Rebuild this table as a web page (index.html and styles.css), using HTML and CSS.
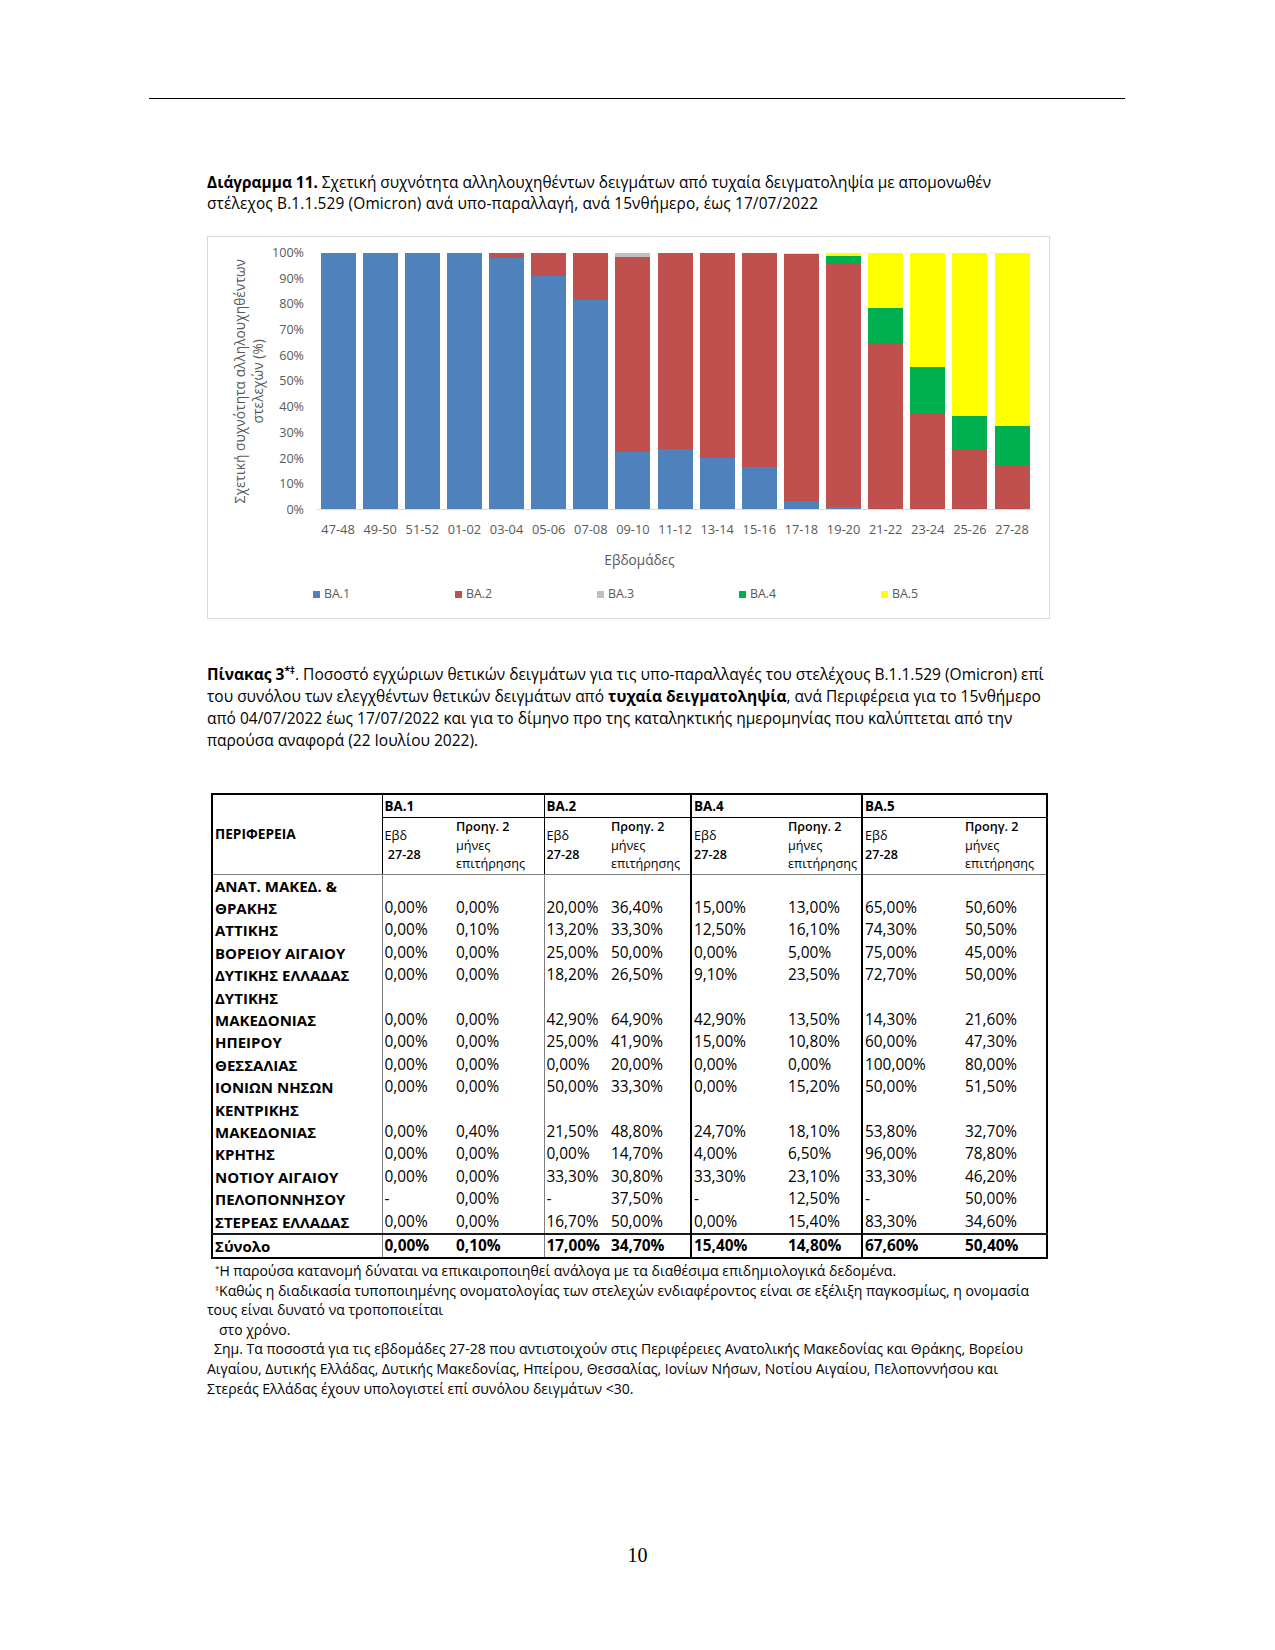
FILE: index.html
```html
<!DOCTYPE html>
<html lang="el">
<head>
<meta charset="utf-8">
<title>Διάγραμμα 11 - Πίνακας 3</title>
<link rel="stylesheet" href="styles.css">
</head>
<body>
<div class="page">
  <div class="rule"></div>
  <div class="content">
    <p class="caption"><b>Διάγραμμα 11.</b> Σχετική συχνότητα αλληλουχηθέντων δειγμάτων από τυχαία δειγματοληψία με απομονωθέν<br><span class="l2">στέλεχος Β.1.1.529 (Omicron) ανά υπο-παραλλαγή, ανά 15νθήμερο, έως 17/07/2022</span></p>

    <div class="chart">
      <div class="ytitle"><span>Σχετική συχνότητα αλληλουχηθέντων</span><br><span>στελεχών (%)</span></div>
      <div class="ylabels">
        <span>100%</span><span>90%</span><span>80%</span><span>70%</span><span>60%</span><span>50%</span><span>40%</span><span>30%</span><span>20%</span><span>10%</span><span>0%</span>
      </div>
      <div class="plot">
        <div class="slot"><div class="bar"><div class="seg ba1" style="height:100%"></div></div></div>
        <div class="slot"><div class="bar"><div class="seg ba1" style="height:100%"></div></div></div>
        <div class="slot"><div class="bar"><div class="seg ba1" style="height:100%"></div></div></div>
        <div class="slot"><div class="bar"><div class="seg ba1" style="height:100%"></div></div></div>
        <div class="slot"><div class="bar"><div class="seg ba1" style="height:98.2%"></div><div class="seg ba2" style="height:1.8%"></div></div></div>
        <div class="slot"><div class="bar"><div class="seg ba1" style="height:90.9%"></div><div class="seg ba2" style="height:9.1%"></div></div></div>
        <div class="slot"><div class="bar"><div class="seg ba1" style="height:81.8%"></div><div class="seg ba2" style="height:18.2%"></div></div></div>
        <div class="slot"><div class="bar"><div class="seg ba1" style="height:22.4%"></div><div class="seg ba2" style="height:76%"></div><div class="seg ba3" style="height:1.6%"></div></div></div>
        <div class="slot"><div class="bar"><div class="seg ba1" style="height:23.6%"></div><div class="seg ba2" style="height:76.4%"></div></div></div>
        <div class="slot"><div class="bar"><div class="seg ba1" style="height:19.8%"></div><div class="seg ba2" style="height:80.2%"></div></div></div>
        <div class="slot"><div class="bar"><div class="seg ba1" style="height:16.6%"></div><div class="seg ba2" style="height:83.4%"></div></div></div>
        <div class="slot"><div class="bar"><div class="seg ba1" style="height:3%"></div><div class="seg ba2" style="height:96.5%"></div><div class="seg ba5" style="height:0.5%"></div></div></div>
        <div class="slot"><div class="bar"><div class="seg ba1" style="height:0.8%"></div><div class="seg ba2" style="height:94.8%"></div><div class="seg ba4" style="height:3.4%"></div><div class="seg ba5" style="height:1%"></div></div></div>
        <div class="slot"><div class="bar"><div class="seg ba2" style="height:64.7%"></div><div class="seg ba4" style="height:14%"></div><div class="seg ba5" style="height:21.3%"></div></div></div>
        <div class="slot"><div class="bar"><div class="seg ba2" style="height:37.6%"></div><div class="seg ba4" style="height:17.7%"></div><div class="seg ba5" style="height:44.7%"></div></div></div>
        <div class="slot"><div class="bar"><div class="seg ba2" style="height:23.2%"></div><div class="seg ba4" style="height:13.1%"></div><div class="seg ba5" style="height:63.7%"></div></div></div>
        <div class="slot"><div class="bar"><div class="seg ba2" style="height:17%"></div><div class="seg ba4" style="height:15.4%"></div><div class="seg ba5" style="height:67.6%"></div></div></div>
      </div>
      <div class="xlabels">
        <span>47-48</span><span>49-50</span><span>51-52</span><span>01-02</span><span>03-04</span><span>05-06</span><span>07-08</span><span>09-10</span><span>11-12</span><span>13-14</span><span>15-16</span><span>17-18</span><span>19-20</span><span>21-22</span><span>23-24</span><span>25-26</span><span>27-28</span>
      </div>
      <div class="xtitle">Εβδομάδες</div>
      <div class="legend">
        <span class="item"><i class="sw ba1"></i>BA.1</span>
        <span class="item"><i class="sw ba2"></i>BA.2</span>
        <span class="item"><i class="sw ba3"></i>BA.3</span>
        <span class="item"><i class="sw ba4"></i>BA.4</span>
        <span class="item"><i class="sw ba5"></i>BA.5</span>
      </div>
    </div>

    <p class="caption2"><b>Πίνακας 3<sup>*‡</sup></b>. Ποσοστό εγχώριων θετικών δειγμάτων για τις υπο-παραλλαγές του στελέχους Β.1.1.529 (Omicron) επί<br>του συνόλου των ελεγχθέντων θετικών δειγμάτων από <b>τυχαία δειγματοληψία</b>, ανά Περιφέρεια για το 15νθήμερο<br>από 04/07/2022 έως 17/07/2022 και για το δίμηνο προ της καταληκτικής ημερομηνίας που καλύπτεται από την<br>παρούσα αναφορά (22 Ιουλίου 2022).</p>

    <table class="data">
      <colgroup>
        <col class="c-reg"><col class="c-1a"><col class="c-1b"><col class="c-2a"><col class="c-2b"><col class="c-4a"><col class="c-4b"><col class="c-5a"><col class="c-5b">
      </colgroup>
      <thead>
        <tr class="h1">
          <th rowspan="2" class="reg-h">ΠΕΡΙΦΕΡΕΙΑ</th>
          <th colspan="2" class="grp gl">BA.1</th>
          <th colspan="2" class="grp gl">BA.2</th>
          <th colspan="2" class="grp gd">BA.4</th>
          <th colspan="2" class="grp gd">BA.5</th>
        </tr>
        <tr class="h2">
          <th class="sub gl">Εβδ<br><b>&nbsp;27-28</b></th>
          <th class="sub"><b>Προηγ. 2</b><br>μήνες<br>επιτήρησης</th>
          <th class="sub gl">Εβδ<br><b>27-28</b></th>
          <th class="sub"><b>Προηγ. 2</b><br>μήνες<br>επιτήρησης</th>
          <th class="sub gd">Εβδ<br><b>27-28</b></th>
          <th class="sub"><b>Προηγ. 2</b><br>μήνες<br>επιτήρησης</th>
          <th class="sub gd">Εβδ<br><b>27-28</b></th>
          <th class="sub"><b>Προηγ. 2</b><br>μήνες<br>επιτήρησης</th>
        </tr>
      </thead>
      <tbody>
        <tr><th>ΑΝΑΤ. ΜΑΚΕΔ. &amp;<br>ΘΡΑΚΗΣ</th><td class="gl">0,00%</td><td>0,00%</td><td class="gl">20,00%</td><td>36,40%</td><td class="gd">15,00%</td><td>13,00%</td><td class="gd">65,00%</td><td>50,60%</td></tr>
        <tr><th>ΑΤΤΙΚΗΣ</th><td class="gl">0,00%</td><td>0,10%</td><td class="gl">13,20%</td><td>33,30%</td><td class="gd">12,50%</td><td>16,10%</td><td class="gd">74,30%</td><td>50,50%</td></tr>
        <tr><th>ΒΟΡΕΙΟΥ ΑΙΓΑΙΟΥ</th><td class="gl">0,00%</td><td>0,00%</td><td class="gl">25,00%</td><td>50,00%</td><td class="gd">0,00%</td><td>5,00%</td><td class="gd">75,00%</td><td>45,00%</td></tr>
        <tr><th>ΔΥΤΙΚΗΣ ΕΛΛΑΔΑΣ</th><td class="gl">0,00%</td><td>0,00%</td><td class="gl">18,20%</td><td>26,50%</td><td class="gd">9,10%</td><td>23,50%</td><td class="gd">72,70%</td><td>50,00%</td></tr>
        <tr><th>ΔΥΤΙΚΗΣ<br>ΜΑΚΕΔΟΝΙΑΣ</th><td class="gl">0,00%</td><td>0,00%</td><td class="gl">42,90%</td><td>64,90%</td><td class="gd">42,90%</td><td>13,50%</td><td class="gd">14,30%</td><td>21,60%</td></tr>
        <tr><th>ΗΠΕΙΡΟΥ</th><td class="gl">0,00%</td><td>0,00%</td><td class="gl">25,00%</td><td>41,90%</td><td class="gd">15,00%</td><td>10,80%</td><td class="gd">60,00%</td><td>47,30%</td></tr>
        <tr><th>ΘΕΣΣΑΛΙΑΣ</th><td class="gl">0,00%</td><td>0,00%</td><td class="gl">0,00%</td><td>20,00%</td><td class="gd">0,00%</td><td>0,00%</td><td class="gd">100,00%</td><td>80,00%</td></tr>
        <tr><th>ΙΟΝΙΩΝ ΝΗΣΩΝ</th><td class="gl">0,00%</td><td>0,00%</td><td class="gl">50,00%</td><td>33,30%</td><td class="gd">0,00%</td><td>15,20%</td><td class="gd">50,00%</td><td>51,50%</td></tr>
        <tr><th>ΚΕΝΤΡΙΚΗΣ<br>ΜΑΚΕΔΟΝΙΑΣ</th><td class="gl">0,00%</td><td>0,40%</td><td class="gl">21,50%</td><td>48,80%</td><td class="gd">24,70%</td><td>18,10%</td><td class="gd">53,80%</td><td>32,70%</td></tr>
        <tr><th>ΚΡΗΤΗΣ</th><td class="gl">0,00%</td><td>0,00%</td><td class="gl">0,00%</td><td>14,70%</td><td class="gd">4,00%</td><td>6,50%</td><td class="gd">96,00%</td><td>78,80%</td></tr>
        <tr><th>ΝΟΤΙΟΥ ΑΙΓΑΙΟΥ</th><td class="gl">0,00%</td><td>0,00%</td><td class="gl">33,30%</td><td>30,80%</td><td class="gd">33,30%</td><td>23,10%</td><td class="gd">33,30%</td><td>46,20%</td></tr>
        <tr><th>ΠΕΛΟΠΟΝΝΗΣΟΥ</th><td class="gl">-</td><td>0,00%</td><td class="gl">-</td><td>37,50%</td><td class="gd">-</td><td>12,50%</td><td class="gd">-</td><td>50,00%</td></tr>
        <tr><th>ΣΤΕΡΕΑΣ ΕΛΛΑΔΑΣ</th><td class="gl">0,00%</td><td>0,00%</td><td class="gl">16,70%</td><td>50,00%</td><td class="gd">0,00%</td><td>15,40%</td><td class="gd">83,30%</td><td>34,60%</td></tr>
      </tbody>
      <tfoot>
        <tr class="total"><th>Σύνολο</th><td class="gl">0,00%</td><td>0,10%</td><td class="gl">17,00%</td><td>34,70%</td><td class="gd">15,40%</td><td>14,80%</td><td class="gd">67,60%</td><td>50,40%</td></tr>
      </tfoot>
    </table>

    <div class="notes">
      <div class="ind1"><sup>*</sup>Η παρούσα κατανομή δύναται να επικαιροποιηθεί ανάλογα με τα διαθέσιμα επιδημιολογικά δεδομένα.</div>
      <div class="ind1"><sup>‡</sup>Καθώς η διαδικασία τυποποιημένης ονοματολογίας των στελεχών ενδιαφέροντος είναι σε εξέλιξη παγκοσμίως, η ονομασία</div>
      <div>τους είναι δυνατό να τροποποιείται</div>
      <div class="ind2">στο χρόνο.</div>
      <div class="ind3">Σημ. Τα ποσοστά για τις εβδομάδες 27-28 που αντιστοιχούν στις Περιφέρειες Ανατολικής Μακεδονίας και Θράκης, Βορείου</div>
      <div>Αιγαίου, Δυτικής Ελλάδας, Δυτικής Μακεδονίας, Ηπείρου, Θεσσαλίας, Ιονίων Νήσων, Νοτίου Αιγαίου, Πελοποννήσου και</div>
      <div>Στερεάς Ελλάδας έχουν υπολογιστεί επί συνόλου δειγμάτων &lt;30.</div>
    </div>
  </div>
  <div class="pagenum">10</div>
</div>
</body>
</html>
```

FILE: styles.css
```css
html, body {
  margin: 0;
  padding: 0;
  background: #fff;
}

body {
  font-family: "Open Sans", "Noto Sans", sans-serif;
  color: #000;
}

.page {
  width: 1275px;
  height: 1650px;
  overflow: hidden;
}

.rule {
  margin: 98px 0 0 149px;
  width: 976px;
  height: 1px;
  background: #000;
}

.content {
  margin-left: 207px;
  width: 843px;
}

.caption {
  margin: 72.5px 0 0 0;
  font-size: 15.4px;
  line-height: 21.5px;
  white-space: nowrap;
}

.caption .l2 {
  letter-spacing: 0.15px;
}

/* ---------- chart ---------- */
.chart {
  margin-top: 21.5px;
  box-sizing: border-box;
  width: 843px;
  height: 383px;
  border: 1px solid #d9d9d9;
  display: grid;
  grid-template-columns: 63px 46px 716px 1fr;
  grid-template-rows: 16px 257px 35px 30px 1fr;
  color: #595959;
}

.ytitle {
  grid-column: 1;
  grid-row: 2;
  justify-self: start;
  align-self: center;
  margin-left: 23px;
  writing-mode: vertical-rl;
  transform: rotate(180deg);
  text-align: center;
  font-size: 13.6px;
  line-height: 18px;
  letter-spacing: 0.1px;
  white-space: nowrap;
}

.ylabels {
  grid-column: 2;
  grid-row: 2;
  margin: -9px 0;
  height: 275px;
  display: flex;
  flex-direction: column;
  justify-content: space-between;
  align-items: flex-end;
  padding-right: 13px;
  font-size: 12.6px;
  line-height: 18px;
}

.plot {
  grid-column: 3;
  grid-row: 2;
  display: flex;
  border-bottom: 1px solid #d9d9d9;
}

.slot {
  flex: 1;
  padding: 0 3.6px;
  display: flex;
}

.bar {
  flex: 1;
  display: flex;
  flex-direction: column-reverse;
}

.seg {
  flex: none;
}

.ba1 { background: #4f81bd; }
.ba2 { background: #c0504d; }
.ba3 { background: #bfbfbf; }
.ba4 { background: #00b050; }
.ba5 { background: #ffff00; }

.xlabels {
  grid-column: 3;
  grid-row: 3;
  display: flex;
  padding-top: 10px;
  font-size: 12.8px;
  line-height: 18px;
}

.xlabels span {
  flex: 1;
  text-align: center;
}

.xtitle {
  grid-column: 3;
  grid-row: 4;
  padding: 6px 71px 0 0;
  text-align: center;
  font-size: 13.6px;
  line-height: 18px;
}

.legend {
  grid-column: 1 / -1;
  grid-row: 5;
  align-self: start;
  display: flex;
  padding: 10px 0 0 105px;
  font-size: 12.4px;
  line-height: 18px;
}

.legend .item {
  width: 142px;
  display: flex;
  align-items: center;
}

.legend .sw {
  width: 7px;
  height: 7px;
  margin-right: 4px;
}

/* ---------- caption 2 ---------- */
.caption2 {
  margin: 44px 0 0 0;
  font-size: 15.5px;
  line-height: 22px;
  white-space: nowrap;
}

.caption2 sup {
  font-size: 10px;
  line-height: 0;
  vertical-align: 6px;
}

/* ---------- table ---------- */
.data {
  margin: 42px 0 0 4px;
  width: 835px;
  border-collapse: collapse;
  table-layout: fixed;
  border: 2.5px solid #000;
  font-size: 15.4px;
}

.c-reg { width: 170px; }
.c-1a { width: 72px; }
.c-1b { width: 90px; }
.c-2a { width: 65px; }
.c-2b { width: 82px; }
.c-4a { width: 95px; }
.c-4b { width: 76px; }
.c-5a { width: 101px; }
.c-5b { width: 84px; }

.data th,
.data td {
  padding: 0 0 0 2px;
  text-align: left;
  white-space: nowrap;
  overflow: visible;
}

.data thead th {
  font-weight: 700;
}

.h1 th {
  height: 22px;
  font-size: 13.4px;
  line-height: 18px;
  vertical-align: middle;
}

.h1 .grp {
  border-bottom: 1px solid #000;
}

.h1 .reg-h {
  font-size: 13.7px;
  vertical-align: middle;
  border-bottom: 1.5px solid #7f7f7f;
}

.h2 th {
  height: 55px;
  border-bottom: 1.5px solid #7f7f7f;
}

.h2 .sub {
  font-weight: 400;
  font-size: 12.6px;
  line-height: 18.5px;
  vertical-align: middle;
}

.h2 .sub b {
  font-weight: 600;
}

.data tbody th {
  font-weight: 700;
  font-size: 15px;
  line-height: 22.4px;
  vertical-align: bottom;
}

.data tbody td {
  line-height: 22.4px;
  vertical-align: bottom;
}

.data .gl {
  border-left: 1.5px solid #7f7f7f;
}

.data thead .gl {
  border-left: 1.5px solid #000;
}

.data .gd {
  border-left: 2.5px solid #000;
}

.total th,
.total td {
  border-top: 2px solid #1a1a1a;
  height: 22px;
  line-height: 22px;
  font-weight: 700;
  vertical-align: middle;
}

.total th {
  font-size: 15px;
}

/* ---------- notes ---------- */
.notes {
  margin-top: 2px;
  font-size: 14px;
  line-height: 19.6px;
  white-space: nowrap;
}

.notes sup {
  font-size: 8px;
  line-height: 0;
  vertical-align: 5px;
}

.notes .ind1 { padding-left: 8px; }
.notes .ind2 { padding-left: 12px; }
.notes .ind3 { padding-left: 7px; }

/* ---------- page number ---------- */
.pagenum {
  margin-top: 145px;
  text-align: center;
  font-family: "Liberation Serif", "DejaVu Serif", serif;
  font-size: 20px;
  line-height: 24px;
}
```
